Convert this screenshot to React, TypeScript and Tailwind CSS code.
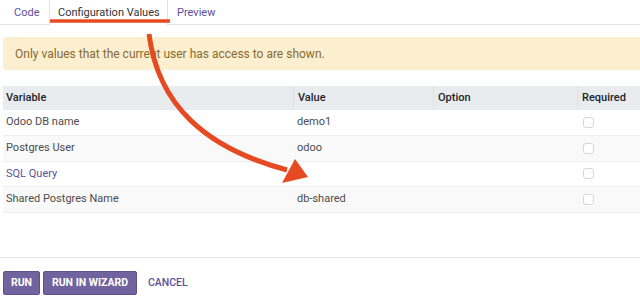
const rows = [
  { name: 'Odoo DB name', value: 'demo1', link: false },
  { name: 'Postgres User', value: 'odoo', link: false },
  { name: 'SQL Query', value: '', link: true },
  { name: 'Shared Postgres Name', value: 'db-shared', link: false },
]

export default function App() {
  return (
    <div
      className="relative w-[640px] h-[298px] bg-white overflow-hidden text-[11px] text-[#4c4c4c]"
      style={{ fontFamily: 'Roboto, "Liberation Sans", sans-serif' }}
    >
      {/* tabs */}
      <div className="flex h-[25px] border-b border-[#e2e2e2] pl-[3px] whitespace-nowrap">
        <div className="w-[46px] pl-[11px] pt-[5px] text-[#5b4f9a]">Code</div>
        <div className="w-[119px] pl-[8px] pt-[5px] border-x border-[#e2e2e2] text-[#333] bg-white h-[25px]">
          Configuration Values
        </div>
        <div className="pl-[9px] pt-[5px] text-[#5b4f9a]">Preview</div>
      </div>

      {/* alert */}
      <div className="ml-[3px] mt-[12px] h-[33px] bg-[#fcefcf] text-[#876a2f] text-[12px] flex items-center pl-[12px] rounded-l-[2px]">
        Only values that the current user has access to are shown.
      </div>

      {/* table */}
      <div className="mt-[16px] ml-[3px]">
        <div className="grid grid-cols-[290px_140px_144px_1fr] h-[24px] bg-[#e9ecef] font-medium text-[#212529]">
          <div className="pl-[3px] flex items-center">Variable</div>
          <div className="pl-[4px] flex items-center border-l border-[#dee2e6]">Value</div>
          <div className="pl-[4px] flex items-center border-l border-[#dee2e6]">Option</div>
          <div className="pl-[4px] flex items-center border-l border-[#dee2e6]">Required</div>
        </div>
        {rows.map((r, i) => (
          <div
            key={r.name}
            className={`grid grid-cols-[290px_140px_144px_1fr] h-[25.75px] border-b border-[#eceef0] ${
              i % 2 === 1 ? 'bg-[#f9f9f9]' : 'bg-white'
            }`}
          >
            <div className={`pl-[3px] flex items-center ${r.link ? 'text-[#5b4f9a]' : ''}`}>{r.name}</div>
            <div className="pl-[4px] flex items-center">{r.value}</div>
            <div />
            <div className="pl-[6px] flex items-center">
              <span className="w-[11px] h-[11px] rounded-[3px] border border-[#d6d6d6] bg-white" />
            </div>
          </div>
        ))}
      </div>

      {/* footer */}
      <div className="mt-[44px] border-t border-[#e7e7e7] pt-[13px] pl-[3px] flex items-center gap-[3px]">
        <button className="h-[24px] w-[37px] bg-[#71639e] border border-[#5f528c] rounded-[2px] text-white font-bold text-[10.5px]">
          RUN
        </button>
        <button className="h-[24px] w-[94px] bg-[#71639e] border border-[#5f528c] rounded-[2px] text-white font-bold text-[10.5px]">
          RUN IN WIZARD
        </button>
        <button className="h-[24px] pl-[8px] text-[#5b4f9a] font-medium text-[10.5px]">CANCEL</button>
      </div>

      {/* annotation */}
      <svg className="absolute left-0 top-0 pointer-events-none" width="640" height="298">
        <line x1="50" y1="21" x2="170" y2="21" stroke="#e64a22" strokeWidth="3.5" />
        <path d="M149 34 C 158 105, 205 148, 287 170" fill="none" stroke="#e64a22" strokeWidth="5" />
        <polygon points="308,177 282,183 295,159" fill="#e64a22" />
      </svg>
    </div>
  )
}
